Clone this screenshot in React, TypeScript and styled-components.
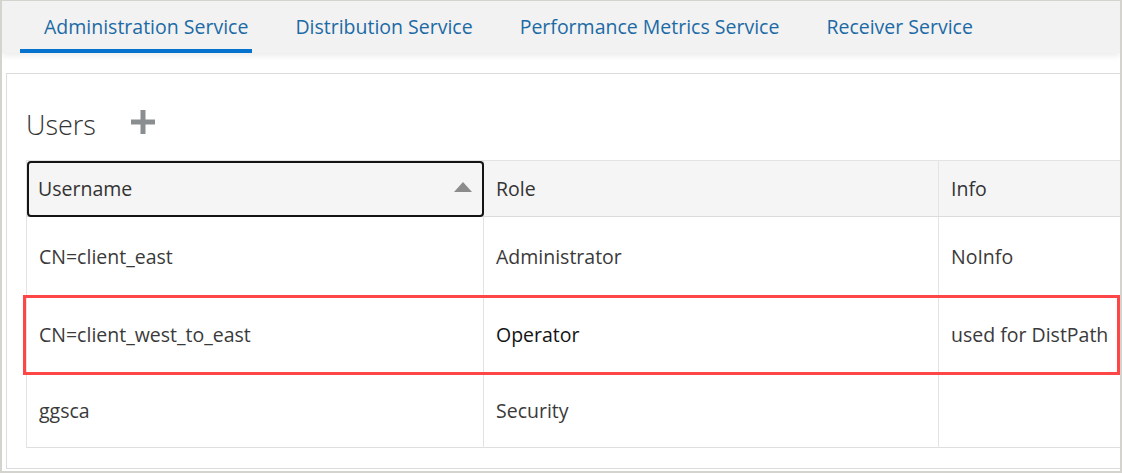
import React from 'react';
import styled, { createGlobalStyle } from 'styled-components';

const GlobalStyle = createGlobalStyle`
  html, body {
    margin: 0;
    padding: 0;
    background: #ffffff;
  }
  body {
    font-family: 'Open Sans', 'Noto Sans', Arial, sans-serif;
  }
`;

type UserRow = {
  username: string;
  role: string;
  info: string;
  height: number;
  strong?: boolean;
};

const users: UserRow[] = [
  { username: 'CN=client_east', role: 'Administrator', info: 'NoInfo', height: 79 },
  { username: 'CN=client_west_to_east', role: 'Operator', info: 'used for DistPath', height: 77, strong: true },
  { username: 'ggsca', role: 'Security', info: '', height: 75 },
];

const tabs = ['Administration Service', 'Distribution Service', 'Performance Metrics Service', 'Receiver Service'];

export default function App() {
  return (
    <>
      <GlobalStyle />
      <Frame>
        <TabBar>
          {tabs.map((t, i) => (
            <Tab key={t} active={i === 0}>
              {t}
            </Tab>
          ))}
        </TabBar>
        <Card>
          <TitleRow>
            <Title>Users</Title>
            <AddButton aria-label="Add user">
              <svg width="24" height="24" viewBox="0 0 24 24">
                <rect x="9.5" y="0" width="5" height="24" fill="#8a8e91" />
                <rect x="0" y="9.5" width="24" height="5" fill="#8a8e91" />
              </svg>
            </AddButton>
          </TitleRow>
          <TableWrap>
            <Table>
              <colgroup>
                <col style={{ width: 457 }} />
                <col style={{ width: 455 }} />
                <col style={{ width: 455 }} />
              </colgroup>
              <thead>
                <tr>
                  <HeadCell focused>
                    <HeadInner>
                      <span>Username</span>
                      <SortArrow viewBox="0 0 18 10" width="18" height="10">
                        <polygon points="9,0 18,10 0,10" fill="#8c8c8c" />
                      </SortArrow>
                    </HeadInner>
                  </HeadCell>
                  <HeadCell>Role</HeadCell>
                  <HeadCell>Info</HeadCell>
                </tr>
              </thead>
              <tbody>
                {users.map((u) => (
                  <BodyRow key={u.username} style={{ height: u.height }}>
                    <Cell>{u.username}</Cell>
                    <Cell strong={u.strong}>{u.role}</Cell>
                    <Cell>{u.info}</Cell>
                  </BodyRow>
                ))}
              </tbody>
            </Table>
            <Highlight />
          </TableWrap>
        </Card>
      </Frame>
    </>
  );
}

const Frame = styled.div`
  box-sizing: border-box;
  width: 1122px;
  height: 473px;
  border: 2px solid #d5d3cd;
  border-top-width: 1px;
  overflow: hidden;
  background: #ffffff;
`;

const TabBar = styled.div`
  display: flex;
  height: 52px;
  padding-left: 18px;
  background: #f2f2f2;
  box-shadow: 0 3px 6px rgba(0, 0, 0, 0.08);
  position: relative;
  z-index: 1;
`;

const Tab = styled.div<{ active?: boolean }>`
  box-sizing: border-box;
  display: flex;
  align-items: center;
  height: 52px;
  padding: 4px 4px 2px 24px;
  margin-right: 19px;
  font-size: 19.5px;
  color: #1c6aa5;
  white-space: nowrap;
  border-bottom: 4px solid ${(p) => (p.active ? '#0572ce' : 'transparent')};
`;

const Card = styled.div`
  box-sizing: border-box;
  width: 1400px;
  margin: 20px 0 0 4px;
  padding: 32px 0 20px 19px;
  border: 1px solid #dcdcdc;
  background: #ffffff;
`;

const TitleRow = styled.div`
  display: flex;
  align-items: center;
  gap: 35px;
  margin-bottom: 17px;
`;

const Title = styled.h2`
  margin: 0;
  font-size: 27px;
  font-weight: 300;
  line-height: 37px;
  color: #333333;
`;

const AddButton = styled.span`
  display: flex;
  width: 24px;
  height: 24px;
  margin-top: -5px;
`;

const TableWrap = styled.div`
  position: relative;
  width: 1367px;
`;

const Table = styled.table`
  table-layout: fixed;
  width: 1367px;
  border-collapse: collapse;
  font-size: 19.5px;
  color: #3a3a3a;
`;

const HeadCell = styled.th<{ focused?: boolean }>`
  box-sizing: border-box;
  height: 56px;
  padding: 0 11px 0 12px;
  text-align: left;
  font-weight: 400;
  color: #333333;
  background: #f5f5f5;
  border: 1px solid #e3e3e3;
  border-bottom: 1px solid #dcdcdc;
  ${(p) =>
    p.focused &&
    `
    padding-left: 11px;
    outline: 2px solid #141414;
    outline-offset: -2px;
    border-radius: 4px;
  `}
`;

const HeadInner = styled.div`
  display: flex;
  align-items: center;
  justify-content: space-between;
`;

const SortArrow = styled.svg`
  display: block;
  margin-top: -4px;
`;

const BodyRow = styled.tr`
  border-bottom: 1px solid #dedede;
`;

const Cell = styled.td<{ strong?: boolean }>`
  box-sizing: border-box;
  padding: 0 12px;
  border-left: 1px solid #e3e3e3;
  border-right: 1px solid #e3e3e3;
  white-space: nowrap;
  color: ${(p) => (p.strong ? '#141414' : '#3a3a3a')};
`;

const Highlight = styled.div`
  position: absolute;
  left: -3px;
  top: 135px;
  width: 1097px;
  height: 80px;
  box-sizing: border-box;
  border: 3px solid #ff4646;
  pointer-events: none;
`;
